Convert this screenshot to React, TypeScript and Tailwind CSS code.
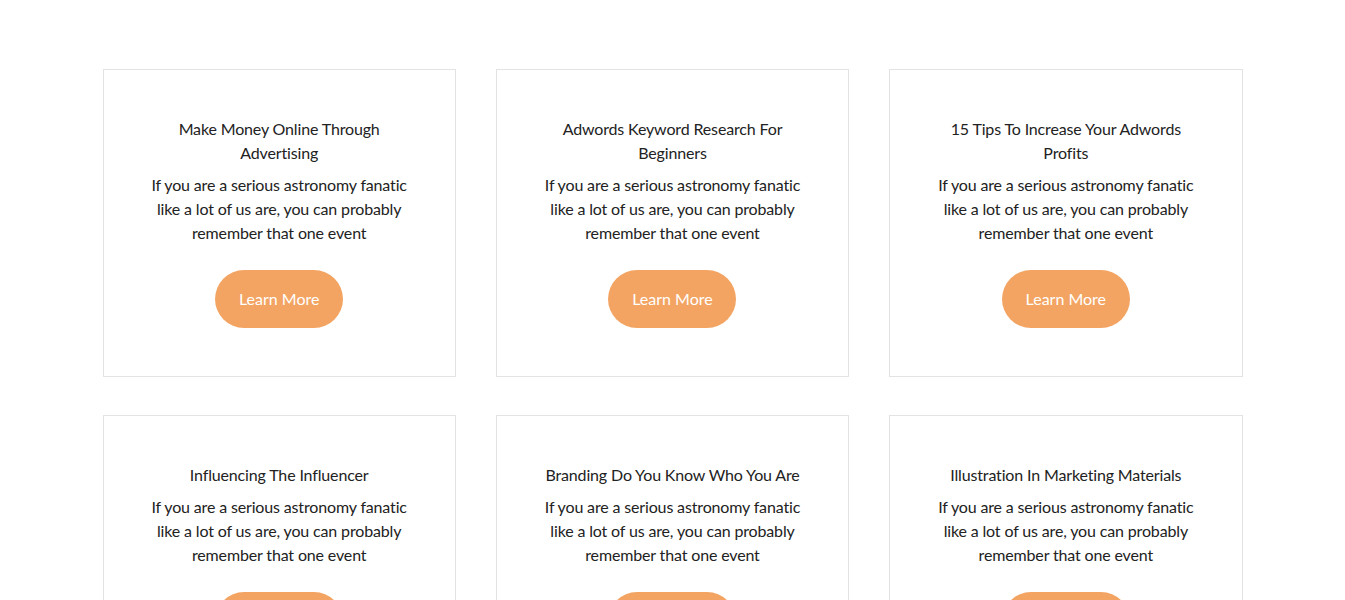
import React from 'react';

const posts = [
  { title: 'Make Money Online Through Advertising' },
  { title: 'Adwords Keyword Research For Beginners' },
  { title: '15 Tips To Increase Your Adwords Profits' },
  { title: 'Influencing The Influencer' },
  { title: 'Branding Do You Know Who You Are' },
  { title: 'Illustration In Marketing Materials' },
];

const PostCard: React.FC<{ title: string }> = ({ title }) => (
  <div className="flex flex-col items-center border border-[#e3e3e3] bg-white px-[46px] pt-[47px] pb-[48px] text-center">
    <h4 className="text-[16px] leading-[24px] font-normal tracking-[-0.15px] text-[#222222]">{title}</h4>
    <p className="mt-2 text-[16px] leading-[24px] tracking-[-0.15px] text-[#222222]">
      If you are a serious astronomy fanatic like a lot of us are, you can probably remember that one event
    </p>
    <a
      href="#"
      className="mt-[25px] flex h-[58px] w-[128px] items-center justify-center rounded-full bg-[#f3a462] text-[16px] text-white"
    >
      Learn More
    </a>
  </div>
);

export default function App() {
  return (
    <div className="min-h-screen bg-white font-['Lato',sans-serif]">
      <div className="mx-auto w-[1140px] pt-[69px]">
        <div className="grid grid-cols-3 gap-x-[40px] gap-y-[38px]">
          {posts.map((p) => (
            <PostCard key={p.title} title={p.title} />
          ))}
        </div>
      </div>
    </div>
  );
}
